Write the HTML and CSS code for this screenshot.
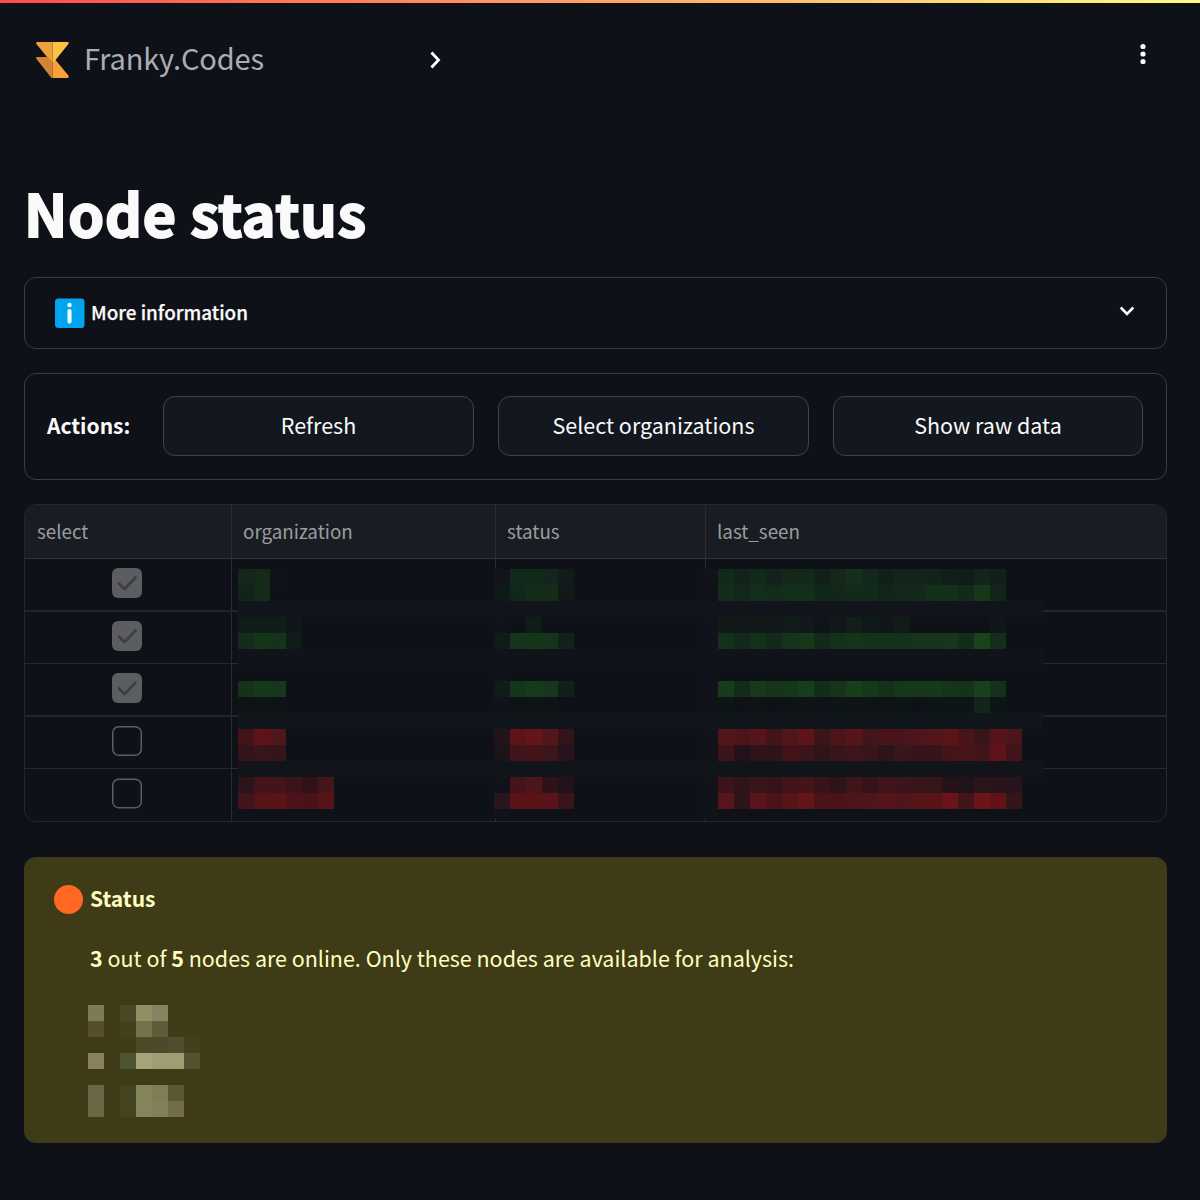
FILE: index.html
```html
<!DOCTYPE html>
<html lang="en">
<head>
<meta charset="utf-8">
<title>Node status</title>
<link rel="stylesheet" href="styles.css">
</head>
<body>
<div class="decoration"></div>
<header class="topbar">
  <div class="brand">
    <svg class="brand-mark" width="33" height="40" viewBox="0 0 33 40">
      <path d="M1.200 19H11L16.500 23V40H15.500L.500 21Q-.500 19 1.200 19Z" fill="#d08536"/>
      <path d="M16.500 22L19.500 22 32.400 37.500Q33.300 40 31.500 40H16.500Z" fill="#fb9f3d"/>
      <path d="M1.500 4H16.500V24L11 19 .400 6Q-.500 4 1.500 4Z" fill="#eea03e"/>
      <path d="M16.500 4H31.500Q33.500 4 32.400 6L19.500 22 16.500 24Z" fill="#fcc142"/>
    </svg>
    <span class="brand-name">Franky.Codes</span>
  </div>
  <svg class="open-sidebar" width="12" height="20" viewBox="0 0 12 20"><path d="M2.500 2.500L9.500 10 2.500 17.500" fill="none" stroke="#fff" stroke-width="2.800"/></svg>
  <svg class="menu" width="8" height="22" viewBox="0 0 8 22" fill="#fafafa"><circle cx="4" cy="3.500" r="2.600"/><circle cx="4" cy="11" r="2.600"/><circle cx="4" cy="18.500" r="2.600"/></svg>
</header>
<main class="content">
  <h1 class="title">Node status</h1>

  <section class="expander">
    <svg class="info" width="30" height="30" viewBox="0 0 30 30"><rect y=".5" width="29.500" height="29.500" rx="3.500" fill="#00a4ef"/><circle cx="14.500" cy="7" r="2.200" fill="#fff"/><rect x="12.500" y="11" width="4" height="14.500" rx="2" fill="#fff"/></svg>
    <span class="expander-label">More information</span>
    <svg class="chevron" width="16" height="12" viewBox="0 0 16 12"><path d="M1.700 2.500L8 8.800 14.300 2.500" fill="none" stroke="#fff" stroke-width="2.600"/></svg>
  </section>

  <section class="actions">
    <span class="actions-label">Actions:</span>
    <button class="button">Refresh</button>
    <button class="button">Select organizations</button>
    <button class="button">Show raw data</button>
  </section>

  <section class="table">
    <div class="row head"><span class="cell">select</span><span class="cell">organization</span><span class="cell">status</span><span class="cell">last_seen</span></div>
    <div class="row thick"><span class="cell pick"><i class="box on"><svg viewBox="0 0 30 30"><path d="M7 15.500L12.500 21 23.500 9.500"/></svg></i></span><span class="cell"></span><span class="cell"></span><span class="cell"></span></div>
    <div class="row"><span class="cell pick"><i class="box on"><svg viewBox="0 0 30 30"><path d="M7 15.500L12.500 21 23.500 9.500"/></svg></i></span><span class="cell"></span><span class="cell"></span><span class="cell"></span></div>
    <div class="row thick"><span class="cell pick"><i class="box on"><svg viewBox="0 0 30 30"><path d="M7 15.500L12.500 21 23.500 9.500"/></svg></i></span><span class="cell"></span><span class="cell"></span><span class="cell"></span></div>
    <div class="row"><span class="cell pick"><svg class="empty" width="30" height="30"><rect x=".75" y=".75" width="28.500" height="28.500" rx="6"/></svg></span><span class="cell"></span><span class="cell"></span><span class="cell"></span></div>
    <div class="row last"><span class="cell pick"><svg class="empty" width="30" height="31"><rect x=".75" y="1.250" width="28.500" height="28.500" rx="6"/></svg></span><span class="cell"></span><span class="cell"></span><span class="cell"></span></div>
    <svg class="redaction" id="table-redaction" width="805" height="249" shape-rendering="crispEdges"></svg>
  </section>

  <section class="alert">
    <div class="alert-head"><span class="dot"></span><strong class="alert-title">Status</strong></div>
    <p class="alert-text"><b>3</b> out of <b>5</b> nodes are online. Only these nodes are available for analysis:</p>
    <svg class="names" id="name-redaction" width="112" height="112" shape-rendering="crispEdges"></svg>
  </section>
</main>
<script src="script.js"></script>
</body>
</html>
```
FILE: styles.css
```css
* { box-sizing: border-box; }
body {
  margin: 0;
  height: 1200px;
  overflow: hidden;
  background: #0e1117;
  color: #fafafa;
  font-family: "Noto Sans CJK SC", "Noto Sans", sans-serif;
  font-size: 21.5px;
}
.decoration { height: 3px; background: linear-gradient(90deg, #ff4b4b, #fffd80); }
.topbar { display: flex; height: 174px; padding: 38px 53px 0 36px; align-items: flex-start; }
.brand { display: flex; width: 393px; height: 36px; gap: 15px; }
.brand-mark { margin-top: -3px; }
.brand-name { font-size: 29px; line-height: 33px; color: #a9adb8; font-weight: 400; letter-spacing: -0.15px; }
.open-sidebar { margin-top: 9px; }
.menu { margin: 2px 0 0 auto; }
.content { display: flex; flex-direction: column; padding: 0 33px 0 24px; }
.title {
  margin: 0; height: 100px; font-size: 58px; line-height: 70px; font-weight: 700;
  letter-spacing: .45px;
  -webkit-text-stroke: 1.800px #fafafa;
}
.expander {
  display: flex; align-items: center; height: 72px; padding: 0 31px 0 30px;
  border: 1px solid #3b3d44; border-radius: 12px;
}
.expander-label { margin: 0 0 2px 6px; font-size: 18.85px; line-height: 30px; font-weight: 500; -webkit-text-stroke: .25px #fafafa; }
.chevron { margin: 0 0 4px auto; }
.actions {
  display: grid; grid-template-columns: 92px 311px 311px 310px; gap: 24px; align-items: start;
  margin-top: 24px; height: 107px; padding: 22px 0 0 22px;
  border: 1px solid #3b3d44; border-radius: 12px;
}
.actions-label { font-weight: 600; font-size: 21px; line-height: 58px; }
.button {
  height: 60px; padding: 0 0 2px; border: 1px solid #41434a; border-radius: 12px;
  background: #13171f; color: #fafafa; font: inherit; line-height: 30px;
}
.table { position: relative; margin-top: 24px; height: 318px; border: 1px solid #24272e; border-radius: 12px; overflow: hidden; }
.row { display: grid; grid-template-columns: 207px 264px 210px 1fr; height: 52px; border-bottom: 1px solid #262930; }
.head { height: 54px; background: #1a1c24; border-color: #303239; font-size: 18.8px; line-height: 51px; color: #9b9c9f; }
.thick { height: 53px; border-bottom-width: 2px; border-color: #21242b; }
.last { border-bottom: 0; }
.cell { border-right: 1px solid #292c33; padding-left: 11px; }
.cell:last-of-type { border-right: 0; }
.cell:first-child { padding-left: 12px; }
.cell.pick { padding: 9px 0 0 87px; }
.box { display: block; width: 30px; height: 30px; border-radius: 6px; }
.on { background: #5b5d61; }
.on svg { display: block; fill: none; stroke: #3c3e42; stroke-width: 2.600; stroke-linecap: round; stroke-linejoin: round; }
.empty { display: block; fill: none; stroke: #5b5d61; stroke-width: 1.500; }
.redaction { position: absolute; left: 213px; top: 64px; }
.alert { margin-top: 35px; height: 286px; padding: 27px 30px; border-radius: 12px; background: #3e3b16; color: #ffffc2; }
.alert-head { display: flex; align-items: center; height: 31px; gap: 7px; }
.dot { width: 29px; height: 29px; border-radius: 50%; background: #ff6723; }
.alert-title { margin-bottom: 3px; font-weight: 600; font-size: 21px; line-height: 30px; }
.alert-text { margin: 28px 0 0 36px; font-size: 21.48px; line-height: 30px; }
.alert-text b { font-weight: 600; }
.names { display: block; margin: 32px 0 0 34px; }
```
FILE: script.js
```js
const CELL = 16;

// Paints pixelated patches; each entry is [column, row, "space separated colours"].
function paint(id, patches) {
  const svg = document.getElementById(id);
  for (const [col, row, colours] of patches) {
    colours.split(" ").forEach((c, i) => rect(svg, (col + i) * CELL, row * CELL, CELL, CELL, "#" + c));
  }
}

function rect(svg, x, y, w, h, fill) {
  const r = document.createElementNS("http://www.w3.org/2000/svg", "rect");
  Object.entries({ x, y, width: w, height: h, fill }).forEach(([k, v]) => r.setAttribute(k, v));
  svg.appendChild(r);
}

const table = document.getElementById("table-redaction");
rect(table, 0, 0, 805, 249, "#0e1117");
rect(table, 256, 0, 16, 249, "#10131a");
rect(table, 464, 0, 16, 249, "#10131a");
rect(table, 0, 32, 805, 16, "#12141c");
rect(table, 0, 80, 805, 16, "#10131a");
rect(table, 0, 144, 805, 16, "#11151c");
rect(table, 0, 192, 805, 16, "#11151a");

paint("table-redaction", [
  [0, 0, "13271a 142b19 0e1518"],
  [0, 1, "12241a 142b19"],
  [0, 3, "111d19 111d19 111d19 101719"],
  [0, 4, "152b1b 143619 143419 111c19"],
  [0, 7, "14341a 15391a 15371a"],
  [0, 8, "0e1316 0e1315 0e1315"],
  [0, 10, "421419 5f1217 51161a"],
  [0, 11, "32141a 381519 34151a"],
  [0, 13, "2d141a 46131a 43141a 3a1419 301318 441519"],
  [0, 14, "41131a 571418 5b1317 4b1319 491217 571317"],
  [16, 0, "131419 12291b 112a1a 12271b 111b19"],
  [16, 1, "111a19 12271b 152b1a 152c19 111a19"],
  [18, 3, "111d19"],
  [16, 4, "111c19 14351a 14371a 14351a 122119"],
  [16, 7, "111c1a 14361a 163b1a 15371b 112019"],
  [17, 8, "0e1315 0e1315 0e1315"],
  [16, 10, "22141a 5c1419 651519 53161a 34141a"],
  [16, 11, "1c1419 41131a 45141a 3c161a 26131b"],
  [17, 13, "45141a 4c151a 2d121a 22131a"],
  [16, 14, "2a141e 5b1318 5c1318 5a1318 39141a"],
  [30, 0, "13291a 11231a 12281a 11231a 132819 132a1a 112019 13271a 14301a 13281a 11201a 12251a 12251a 12231a 111f1a 111c19 12251b 11201a"],
  [30, 1, "132d1a 12281b 132e1a 132b1a 132e1a 142f1a 11271a 12271a 13291a 122a1a 12251a 13281a 13291a 132e1a 142f1a 13291a 153819 12251b"],
  [30, 3, "111a19 101819 111a19 101819 111b19 101819 0e1418 101819 111e1a 101919 101719 111c19 0e1217 0e1218 0e1117 0e1117 0e1117 0f1618"],
  [30, 4, "14321a 122a1b 14321a 132a1a 15351a 163819 132a1a 14311a 15351a 14311b 14321a 14321a 15341a 15351a 163719 132d1a 1a431a 142e1b"],
  [30, 7, "163c1a 142b1b 163a1a 15341a 15381a 163e1a 132d1a 15341a 16401a 153a1a 14311a 15381a 16391a 153a1a 153519 14331b 18401a 15301b"],
  [30, 8, "0e1517 0e1216 0e1316 0e1216 0e1316 0e1315 0e1317 0e1517 0e1316 0e1316 0e1316 0e1517 0e1216 0e1517 0e1517 0e1417 122518 0e1517"],
  [30, 10, "51151a 4d151a 55151a 3f151a 51161a 611418 3a1519 4c151a 571519 42151a 4a151a 47151a 50151a 52151a 5a1518 48151a 381519 561419 4c151a"],
  [30, 11, "3b151b 23121a 2e141a 2e141a 42141a 3b141a 31141a 38151b 3e151a 38151a 2d141a 38161a 36141a 36141b 43151a 491419 40151b 601318 42141a"],
  [30, 13, "3a141a 31141a 38151a 34141a 42141a 43141a 38141a 2d141a 40151a 34141a 40141a 3a151b 38151b 38151b 26131a 22131a 29151a 2a141a 27141a"],
  [30, 14, "58151a 2d141a 5b1419 481419 541519 631518 49131a 4b1319 4b1519 4f151a 551519 4f151a 551519 591419 6a1418 43141a 6b1519 631318 34151a"]
]);

paint("name-redaction", [
  [0, 0, "7d7a56"], [2, 0, "494928 8f8e65 878260"],
  [0, 1, "564f2f"], [2, 1, "424119 74744c 625b3a"],
  [3, 2, "4b4a29 4b4a29 4f4e30 433e1b"],
  [0, 3, "89835d"], [2, 3, "4f5432 a4a37a a19d72 a19d72 565131"],
  [0, 5, "6b6646"], [2, 5, "454421 85855b 7f7e57 5c5733"],
  [0, 6, "696746"], [2, 6, "454421 85855b 81805a 726b4c"]
]);
```
